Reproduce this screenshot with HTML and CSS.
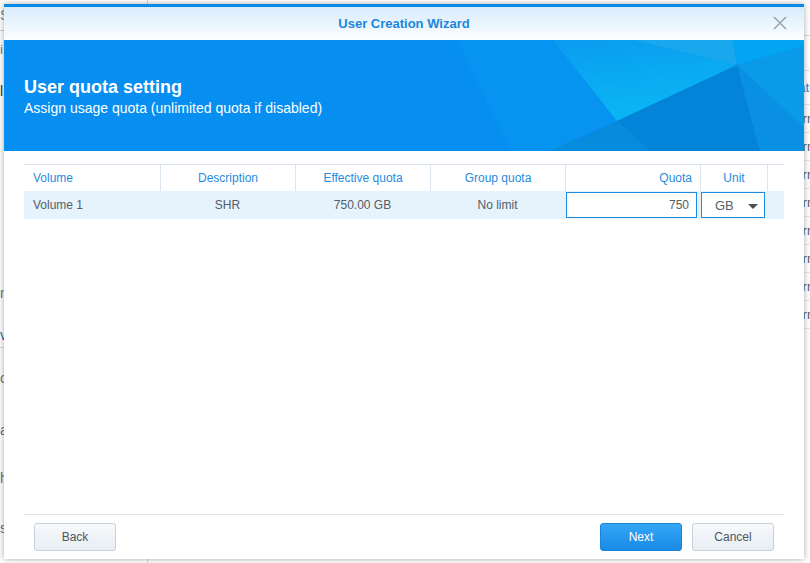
FILE: index.html
```html
<!DOCTYPE html>
<html lang="en">
<head>
<meta charset="utf-8">
<title>User Creation Wizard</title>
<link rel="stylesheet" href="styles.css">
</head>
<body>
<div class="desktop">
  <aside class="side">
    <div class="side-top"><span class="frag">S</span></div>
    <div class="side-tab"><span class="frag frag-blue">i</span></div>
    <div class="side-panel">
      <div class="side-item dark"><span class="frag">l</span></div>
      <div class="side-gap"></div>
      <div class="side-item s-n"><span class="frag">n</span></div>
      <div class="side-item s-v"><span class="frag">v</span></div>
      <div class="side-item s-c"><span class="frag">c</span></div>
      <div class="side-item s-a"><span class="frag">a</span></div>
      <div class="side-item s-h"><span class="frag">h</span></div>
      <div class="side-item s-s"><span class="frag">s</span></div>
    </div>
  </aside>
  <main class="main">
    <div class="mtb1"></div>
    <div class="mtb2"></div>
    <div class="grow ghead"><span>Status</span></div>
    <div class="grow"><span>Normal</span></div>
    <div class="grow"><span>Normal</span></div>
    <div class="grow"><span>Normal</span></div>
    <div class="grow"><span>Normal</span></div>
    <div class="grow"><span>Normal</span></div>
    <div class="grow"><span>Normal</span></div>
    <div class="grow"><span>Normal</span></div>
    <div class="grow"><span>Normal</span></div>
  </main>
</div>

<div class="dialog">
  <div class="titlebar">
    <span class="title">User Creation Wizard</span>
    <span class="close">
      <svg width="14" height="14" viewBox="0 0 14 14"><path d="M1 1 L13 13 M13 1 L1 13" stroke="#9ea5ac" stroke-width="1.6" fill="none"/></svg>
    </span>
  </div>
  <div class="banner">
    <svg class="facets" width="800" height="111" viewBox="0 0 800 111">
      <defs>
        <linearGradient id="g3" x1="0" y1="0" x2="0.3" y2="1">
          <stop offset="0" stop-color="#0a9cef"/>
          <stop offset="1" stop-color="#0ab6f4"/>
        </linearGradient>
      </defs>
      <polygon points="453,0 549,0 613,81 546,111 506,111" fill="#0794f0"/>
      <polygon points="549,0 629,0 733,25 613,81" fill="url(#g3)"/>
      <polygon points="629,0 729,0 733,25" fill="#19a7ed"/>
      <polygon points="729,0 800,0 800,6 733,25" fill="#02a5f2"/>
      <polygon points="733,25 800,6 800,88" fill="#0a9ae8"/>
      <polygon points="733,25 613,81 646,111 756,111" fill="#0484d9"/>
      <polygon points="613,81 546,111 646,111" fill="#078bdc"/>
      <polygon points="733,25 756,111 800,111 800,88" fill="#0a90e2"/>
    </svg>
    <h1 class="banner-title">User quota setting</h1>
    <p class="banner-sub">Assign usage quota (unlimited quota if disabled)</p>
  </div>
  <div class="body">
    <div class="qgrid">
      <div class="th left">Volume</div>
      <div class="th sep">Description</div>
      <div class="th sep">Effective quota</div>
      <div class="th sep">Group quota</div>
      <div class="th sep right">Quota</div>
      <div class="th sep">Unit</div>
      <div class="th sep"></div>

      <div class="td left">Volume 1</div>
      <div class="td">SHR</div>
      <div class="td">750.00 GB</div>
      <div class="td">No limit</div>
      <div class="td input-cell"><span class="field">750</span></div>
      <div class="td input-cell"><span class="select">GB<span class="arrow"></span></span></div>
      <div class="td"></div>
    </div>
  </div>
  <div class="footer">
    <button class="btn">Back</button>
    <div class="spacer"></div>
    <button class="btn primary">Next</button>
    <button class="btn">Cancel</button>
  </div>
</div>
</body>
</html>
```

FILE: styles.css
```css
* { box-sizing: border-box; }
html, body { margin: 0; padding: 0; }
body {
  width: 810px;
  height: 563px;
  overflow: hidden;
  position: relative;
  background: #ffffff;
  font-family: "Liberation Sans", Arial, sans-serif;
  font-size: 12px;
  color: #545d67;
}

/* ---------- background page ---------- */
.desktop { display: flex; height: 563px; }
.side {
  flex: none;
  width: 148px;
  border-right: 1px solid #d3d9df;
  display: flex;
  flex-direction: column;
}
.side-top {
  flex: none;
  height: 31px;
  border-bottom: 1px solid #c9d0d7;
  display: flex;
  align-items: center;
  font-size: 14px;
  color: #7b828a;
}
.side-tab {
  flex: none;
  height: 36px;
  display: flex;
  align-items: center;
  font-size: 13px;
  color: #5f7d99;
}
.side-panel {
  display: flex;
  flex-direction: column;
  font-size: 14px;
  color: #6b737b;
}
.side-item { flex: none; display: flex; align-items: center; }
.side-item.dark { color: #333; height: 48px; }
.side-gap { flex: none; height: 157px; }
.s-n { height: 42px; }
.s-v { height: 34px; padding-top: 8px; color: #2c6ea3; border-bottom: 1px solid #d9dee3; }
.s-c { height: 60px; }
.s-a { height: 44px; }
.s-h { height: 52px; }
.s-s { height: 48px; }
.frag { margin-left: 0; }

.main { flex: 1; min-width: 0; display: flex; flex-direction: column; overflow: hidden; }
.mtb1 { flex: none; height: 36px; border-bottom: 1px solid #d5dbe1; }
.mtb2 { flex: none; height: 35px; border-bottom: 1px solid #e0e5ea; }
.grow {
  flex: none;
  height: 28px;
  border-bottom: 1px solid #e3e7eb;
  display: flex;
  align-items: center;
  padding-left: 638px;
  font-size: 13px;
  color: #555c63;
  white-space: nowrap;
}
.ghead { height: 34px; color: #1a84d6; }

/* ---------- dialog ---------- */
.dialog {
  position: absolute;
  left: 4px;
  top: 4px;
  width: 800px;
  height: 555px;
  background: #ffffff;
  border-top: 3px solid #0b8ae6;
  box-shadow: 0 0 6px rgba(0, 0, 0, 0.35);
  display: flex;
  flex-direction: column;
}
.titlebar {
  height: 33px;
  flex: none;
  position: relative;
  display: flex;
  align-items: center;
  justify-content: center;
  background: linear-gradient(#d8ebfb, #fcfeff);
}
.title {
  font-weight: bold;
  font-size: 13px;
  color: #1a87dd;
}
.close {
  position: absolute;
  right: 17px;
  top: 9px;
  width: 14px;
  height: 14px;
  display: block;
}
.close svg { display: block; }

.banner {
  height: 111px;
  flex: none;
  position: relative;
  background: #068ef0;
  padding: 37px 20px 0;
  color: #ffffff;
  overflow: hidden;
}
.facets { position: absolute; left: 0; top: 0; display: block; }
.banner-title {
  position: relative;
  margin: 0;
  font-size: 18px;
  line-height: 21px;
  font-weight: bold;
}
.banner-sub {
  position: relative;
  margin: 2px 0 0;
  font-size: 14px;
  line-height: 16px;
}

.body {
  flex: 1;
  padding: 13px 20px 0;
}
.qgrid {
  display: grid;
  grid-template-columns: 136px 135px 135px 135px 135px 67px 17px;
  grid-template-rows: 27px 28px;
}
.th {
  border-top: 1px solid #dce6f0;
  display: flex;
  align-items: center;
  justify-content: center;
  color: #1f8be0;
  font-size: 12px;
}
.th.sep { border-left: 1px solid #dce6f0; }
.th.left, .td.left { justify-content: flex-start; padding-left: 9px; }
.th.right { justify-content: flex-end; padding-right: 8px; }
.td {
  background: #e6f3fd;
  display: flex;
  align-items: center;
  justify-content: center;
  color: #545d67;
  font-size: 12px;
}
.td.input-cell { justify-content: flex-start; padding: 1px 0 1px 1px; }
.field {
  width: 131px;
  height: 26px;
  border: 1px solid #1a8de3;
  background: #ffffff;
  display: flex;
  align-items: center;
  justify-content: flex-end;
  padding-right: 7px;
  color: #545d67;
}
.select {
  width: 64px;
  height: 26px;
  border: 1px solid #1a8de3;
  background: #ffffff;
  display: flex;
  align-items: center;
  padding-left: 13px;
  color: #545d67;
  font-size: 13px;
}
.arrow {
  margin-left: 14px;
  margin-top: 2px;
  width: 0;
  height: 0;
  border-left: 5px solid transparent;
  border-right: 5px solid transparent;
  border-top: 5px solid #4a5057;
}

.footer {
  flex: none;
  margin: 0 20px;
  border-top: 1px solid #dde2e7;
  padding: 8px 10px;
  display: flex;
  gap: 10px;
}
.spacer { flex: 1; }
.btn {
  width: 82px;
  height: 28px;
  border: 1px solid #c6d0da;
  border-radius: 3px;
  background: linear-gradient(#f6f9fc, #e9eef3);
  font-family: "Liberation Sans", Arial, sans-serif;
  font-size: 12px;
  color: #4d5661;
  padding: 0;
}
.btn.primary {
  border-color: #1a84d8;
  background: linear-gradient(#33a7f6, #1a8ae5);
  color: #ffffff;
}
```
